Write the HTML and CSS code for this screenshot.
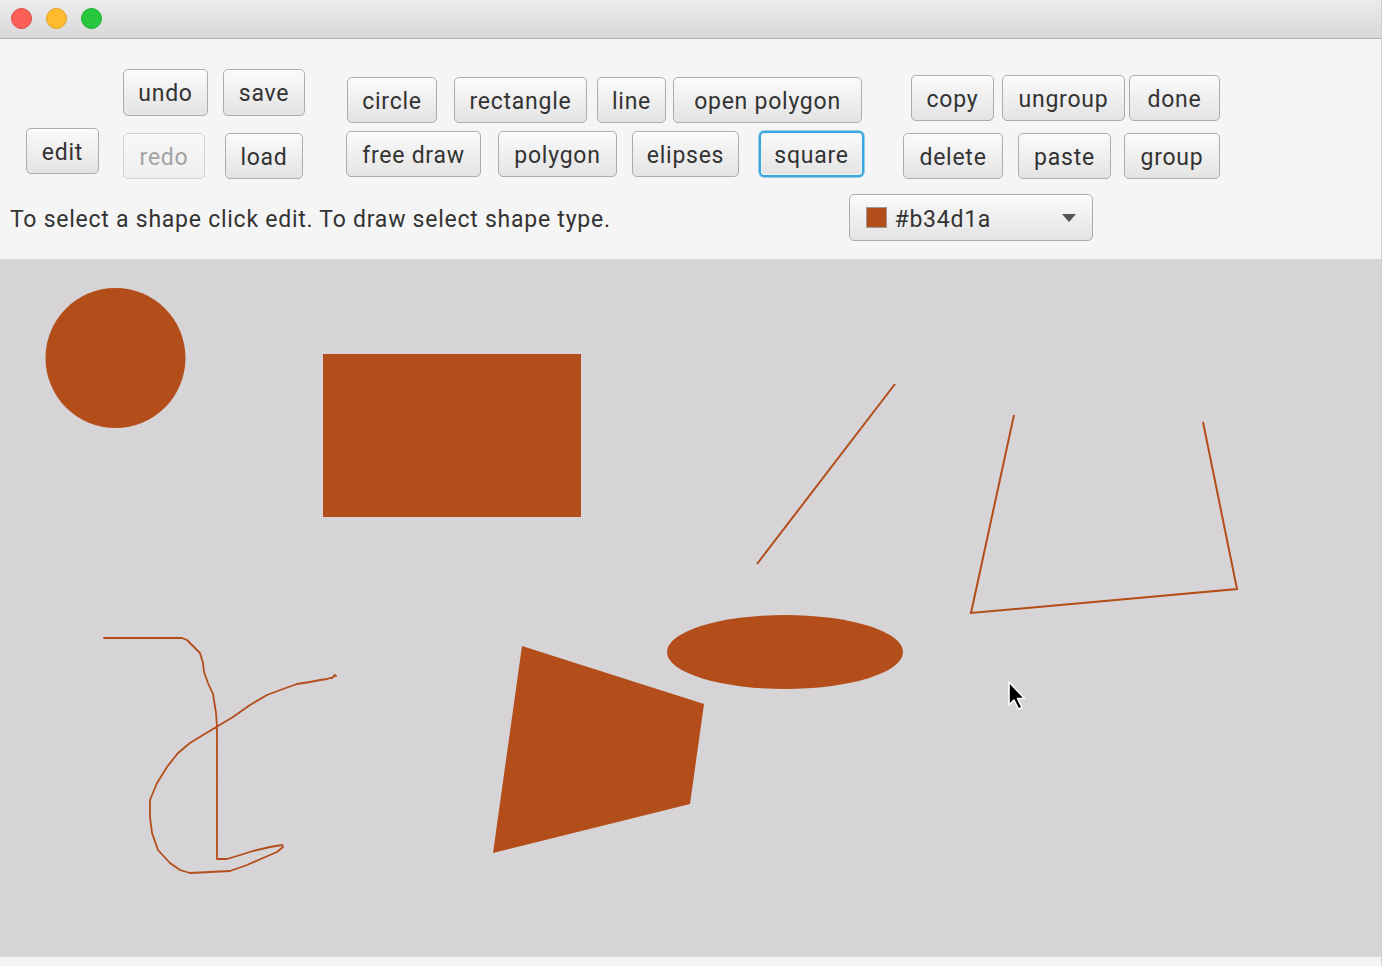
FILE: index.html
```html
<!DOCTYPE html>
<html lang="en">
<head>
<meta charset="utf-8">
<title>Shapes</title>
<link rel="stylesheet" href="styles.css">
</head>
<body>
<div class="window">
  <div class="titlebar">
    <span class="light red"></span>
    <span class="light yellow"></span>
    <span class="light green"></span>
  </div>
  <div class="toolbar">
    <div class="controls">
      <div class="group group-edit">
        <button class="btn w-edit">edit</button>
      </div>
      <div class="group group-file">
        <button class="btn w-undo row1">undo</button>
        <button class="btn w-save row1 c2">save</button>
        <button class="btn w-redo disabled" disabled>redo</button>
        <button class="btn w-load c2">load</button>
      </div>
      <div class="group group-shapes">
        <div class="row row-a">
          <button class="btn w-circle">circle</button>
          <button class="btn w-rect g17">rectangle</button>
          <button class="btn w-line g10">line</button>
          <button class="btn w-open g7">open polygon</button>
        </div>
        <div class="row row-b">
          <button class="btn w-free">free draw</button>
          <button class="btn w-poly g17">polygon</button>
          <button class="btn w-elip g15">elipses</button>
          <button class="btn w-square g20 focused">square</button>
        </div>
      </div>
      <div class="group group-edit-ops">
        <div class="row row-c">
          <button class="btn w-copy">copy</button>
          <button class="btn w-ungroup g8">ungroup</button>
          <button class="btn w-done g4">done</button>
        </div>
        <div class="row row-d">
          <button class="btn w-delete">delete</button>
          <button class="btn w-paste g15">paste</button>
          <button class="btn w-group g13">group</button>
        </div>
      </div>
    </div>
    <div class="status">
      <span class="hint">To select a shape click edit. To draw select shape type.</span>
      <div class="picker">
        <span class="swatch"></span>
        <span class="picker-label">#b34d1a</span>
        <span class="arrow"></span>
      </div>
    </div>
  </div>
  <div class="canvas">
    <svg class="drawing" width="1382" height="698" viewBox="0 259 1382 698" xmlns="http://www.w3.org/2000/svg">
      <circle cx="115.5" cy="358" r="70" fill="#b34d1a"/>
      <rect x="323" y="354" width="258" height="163" fill="#b34d1a"/>
      <line x1="757" y1="564" x2="895" y2="384" stroke="#b34d1a" stroke-width="2"/>
      <polyline points="1014,415 971,613 1237,589 1203,422" fill="none" stroke="#b34d1a" stroke-width="2"/>
      <ellipse cx="785" cy="652" rx="118" ry="37" fill="#b34d1a"/>
      <polygon points="522,646 704,704 690,804 493,853" fill="#b34d1a"/>
      <polyline fill="none" stroke="#b34d1a" stroke-width="1.8" stroke-linejoin="round" stroke-linecap="round"
        points="104,638 182,638 187,640 200,653 203,663 204,672 208,683 213,694 216,713 217,727 217,859 227,859 237,856 253,851 270,847 282,845 283,847 277,852 263,858 247,865 230,871 210,872 190,873 180,870 170,863 158,850 152,833 150,817 150,800 157,783 167,767 178,753 190,743 203,735 218,726 233,717 250,705 267,695 283,689 297,684 310,682 320,680 327,679 330,678 332,678 333,677 335,675 336,676"/>
      <path d="M1009 682 L1009 705 L1014 700 L1018.5 709 L1022 707.5 L1017.5 698.5 L1024.5 698.5 Z" fill="#000" stroke="#fff" stroke-width="1.6" stroke-linejoin="round"/>
    </svg>
  </div>
  <div class="bottom"></div>
</div>
</body>
</html>
```
FILE: styles.css
```css
* { box-sizing: border-box; }
html, body { margin: 0; padding: 0; }
body {
  width: 1382px;
  height: 966px;
  overflow: hidden;
  background: #f4f4f4;
  font-family: Roboto, "Liberation Sans", Arial, sans-serif;
  color: #333;
}
.window {
  width: 1382px;
  height: 966px;
  display: flex;
  flex-direction: column;
  border-right: 1px solid #d0d0d0;
}
.titlebar {
  height: 39px;
  flex: none;
  background: linear-gradient(#ececec, #d8d8d8);
  border-bottom: 1px solid #b1b1b1;
  display: flex;
  align-items: center;
  padding-left: 11px;
  padding-bottom: 1px;
  gap: 14px;
}
.light {
  width: 21px;
  height: 21px;
  border-radius: 50%;
  display: block;
}
.red { background: #fd5e57; border: 1px solid #e0443e; }
.yellow { background: #febb2e; border: 1px solid #dea123; }
.green { background: #27c840; border: 1px solid #1aab29; }

.toolbar {
  height: 220px;
  flex: none;
  background: #f5f5f5;
  display: flex;
  flex-direction: column;
}
.controls {
  display: flex;
  align-items: flex-start;
  padding-left: 26px;
  height: 140px;
}
.btn {
  font-family: inherit;
  font-size: 23px;
  color: #333;
  height: 46px;
  padding: 2px 0 0;
  border: 1.5px solid #acacac;
  border-radius: 5px;
  background: linear-gradient(#fbfbfb, #e3e3e3);
  box-shadow: inset 0 1px 0 #fff;
  display: flex;
  align-items: center;
  justify-content: center;
  flex: none;
  letter-spacing: 0.75px;
}
.btn.disabled {
  color: #a3a3a3;
  border-color: #d3d3d3;
  background: linear-gradient(#f8f8f8, #efefef);
}
.btn.focused {
  border: 2px solid #3aa6dd;
  box-shadow: inset 0 0 0 1px #e8f4fb, 0 0 0 0.5px #3aa6dd;
}
.group-edit { margin-top: 89px; }
.group-file {
  margin-left: 24px;
  margin-top: 30px;
  display: grid;
  grid-template-columns: 85px 82px;
  grid-template-rows: 47px 46px;
  column-gap: 15px;
  row-gap: 17px;
}
.group-file .c2 { justify-self: center; }
.group-file .row1 { height: 47px; }
.group-shapes {
  margin-left: 41px;
  margin-top: 38px;
  display: flex;
  flex-direction: column;
  gap: 8px;
}
.group-edit-ops {
  margin-left: 39px;
  margin-top: 36px;
  display: flex;
  flex-direction: column;
  gap: 12px;
}
.row { display: flex; }
.row-a { margin-left: 1px; }
.row-c { margin-left: 8px; }
.g4 { margin-left: 4px; }
.g7 { margin-left: 7px; }
.g8 { margin-left: 8px; }
.g10 { margin-left: 10px; }
.g13 { margin-left: 13px; }
.g15 { margin-left: 15px; }
.g17 { margin-left: 17px; }
.g20 { margin-left: 20px; }

.w-edit { width: 73px; }
.w-undo { width: 85px; }
.w-save { width: 82px; }
.w-redo { width: 82px; }
.w-load { width: 78px; }
.w-circle { width: 90px; }
.w-rect { width: 133px; }
.w-line { width: 69px; }
.w-open { width: 189px; }
.w-free { width: 135px; }
.w-poly { width: 119px; }
.w-elip { width: 107px; }
.w-square { width: 105px; }
.w-copy { width: 83px; }
.w-ungroup { width: 123px; }
.w-done { width: 91px; }
.w-delete { width: 100px; }
.w-paste { width: 93px; }
.w-group { width: 96px; }

.status {
  margin-top: 15px;
  height: 47px;
  display: flex;
  align-items: center;
  padding-left: 10px;
}
.hint {
  font-size: 23px;
  width: 839px;
  flex: none;
  letter-spacing: 0.75px;
  padding-top: 3px;
}
.picker {
  width: 244px;
  height: 47px;
  border: 1.5px solid #acacac;
  border-radius: 5px;
  background: linear-gradient(#fbfbfb, #e3e3e3);
  box-shadow: inset 0 1px 0 #fff;
  display: flex;
  align-items: center;
  padding-left: 15.5px;
}
.swatch {
  width: 21px;
  height: 21px;
  background: #b34d1a;
  border: 1px solid #9a9a9a;
  flex: none;
}
.picker-label {
  font-size: 23px;
  margin-left: 8px;
  letter-spacing: 0.75px;
  width: 167px;
  padding-top: 3px;
}
.arrow {
  width: 0;
  height: 0;
  border-left: 7.5px solid transparent;
  border-right: 7.5px solid transparent;
  border-top: 8px solid #555;
}
.canvas {
  height: 698px;
  flex: none;
  background: #d6d4d7;
}
.drawing { display: block; }
.bottom {
  flex: 1;
  background: #f4f4f4;
}
```
